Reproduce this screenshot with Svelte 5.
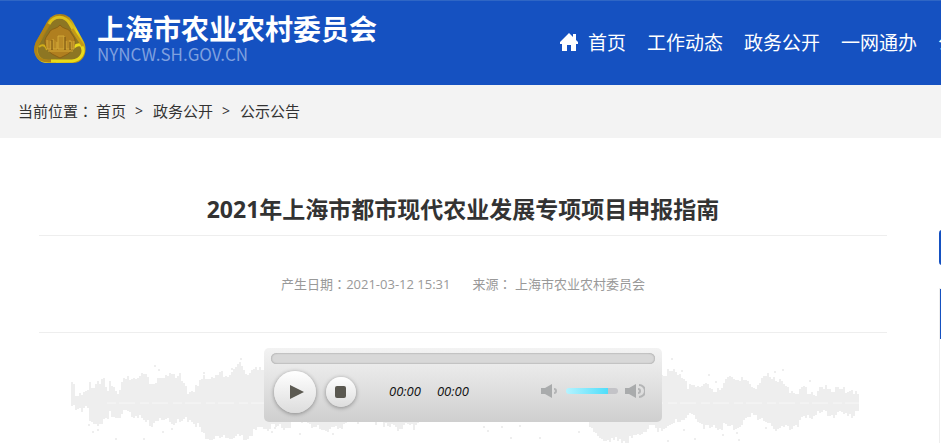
<script lang="ts">
  const menu = ['首页', '工作动态', '政务公开', '一网通办', '公众互动'];
  const crumbs = ['首页', '政务公开', '公示公告'];

  // outline of the sound wave: x, height above the axis, depth below it
  const envelope = [
    [0, 20, 5], [2, 22, 4], [4, 10, 3], [8, 11, 4], [12, 11, 6], [16, 10, 8],
    [18, 20, 20], [22, 18, 21], [26, 22, 20], [32, 21, 17], [36, 11, 18],
    [38, 21, 12], [46, 12, 12], [50, 20, 12], [56, 24, 10], [64, 25, 12],
    [74, 29, 20], [80, 20, 20], [86, 22, 17], [94, 25, 17], [98, 34, 18],
    [104, 26, 18], [108, 26, 20], [112, 16, 18], [118, 11, 14], [126, 17, 22],
    [132, 26, 33], [142, 26, 36], [150, 28, 36], [158, 30, 34], [168, 38, 35],
    [176, 30, 34], [182, 31, 28], [190, 34, 24], [218, 34, 24], [222, 34, 17],
    [236, 34, 17], [240, 34, 26], [268, 34, 25], [274, 34, 18], [310, 34, 18],
    [316, 34, 24], [342, 34, 24], [350, 34, 15], [516, 34, 15], [520, 34, 27],
    [526, 34, 35], [546, 34, 38], [560, 34, 37], [576, 34, 25], [592, 28, 25],
    [602, 33, 22], [611, 28, 14], [616, 14, 12], [622, 17, 14], [630, 20, 21],
    [640, 12, 26], [648, 16, 22], [656, 24, 25], [664, 26, 25], [674, 20, 18],
    [682, 16, 10], [692, 26, 19], [702, 28, 24], [710, 20, 25], [720, 12, 23],
    [730, 13, 18], [744, 11, 11], [756, 15, 11], [770, 12, 12], [780, 13, 11],
    [787, 8, 8],
  ];

  const specks = [
    [83, 25], [87, 29], [132, 32], [169, 18], [160, 28], [17, 84], [21, 91],
    [26, 89], [44, 98], [72, 98], [91, 91], [100, 88], [600, 18], [610, 30],
    [637, 34], [644, 41], [703, 31], [711, 29], [738, 40], [665, 92],
    [612, 89], [623, 98], [651, 94], [667, 99], [596, 100], [694, 87],
    [203, 87], [200, 91], [228, 93], [258, 87], [261, 93], [412, 86],
    [416, 90], [430, 86], [448, 85], [439, 97], [468, 97], [507, 91],
  ];

  function depth(x: number, side: number) {
    const i = Math.max(1, envelope.findIndex((p) => p[0] >= x));
    const a = envelope[i - 1];
    const b = envelope[i];
    const t = (x - a[0]) / (b[0] - a[0]);
    const noise = ((Math.sin(x * 12.9 + side * 78.2) * 43758.5) % 1) * 4;
    return Math.round(a[side] + (b[side] - a[side]) * t + noise);
  }

  let top = '';
  let bottom = '';
  for (let x = 0; x < 787; x += 2) {
    top += `V${63 - depth(x, 1)}h2`;
    bottom = `V${63 + depth(x, 2)}h-2` + bottom;
  }
  const wave = `M0 63${top}V63${bottom}Z`;

  let progress = $state(0);
  let volume = $state(80);
</script>

<header>
  <a class="brand" href="/">
    <svg class="emblem" viewBox="0 0 52 50" aria-hidden="true">
      <defs>
        <linearGradient id="gold" x1="0" y1="0" x2="1" y2="1">
          <stop offset="0" stop-color="#d9b411" />
          <stop offset="0.3" stop-color="#a77b16" />
          <stop offset="0.6" stop-color="#e7d51c" />
          <stop offset="1" stop-color="#b3850f" />
        </linearGradient>
      </defs>
      <path
        d="M26 0C32 0 36 3 39 8L50 28C54 37 50 49 39 49H13C2 49-2 37 2 28L13 8C16 3 20 0 26 0Z"
        fill="url(#gold)"
      />
      <path
        d="M26 4C31 4 34 6 37 12L47 31C50 39 46 46 38 46H14C5 46 2 38 5 31L16 11C18 6 21 4 26 4Z"
        fill="#8d7623"
      />
      <path d="M15 10C20 1 31 1 36 10L40 17" fill="none" stroke="#dcc01c" stroke-width="3" />
      <path d="M14 10L3 29C-1 39 4 47 14 47H22" fill="none" stroke="#b08417" stroke-width="3" />
      <path d="M17 47H38C47 46 52 38 47 31C44 30 42 31 40 33" fill="none" stroke="#eadb1a" stroke-width="3" />
      <path d="M38 15L49 32" stroke="#c59a17" stroke-width="3" />
      <path d="M5 33C8 30 12 31 13 36" fill="none" stroke="#d1ad18" stroke-width="2" />
      <path
        d="M26 11C29 15 33 14 36 17C37 20 40 22 41 26C41 33 38 37 34 40L26 44L18 40C14 37 11 33 11 26C12 22 15 20 16 17C19 14 23 15 26 11Z"
        fill="#b07f1f"
        stroke="#8b6115"
      />
      <path
        d="M13 26V35H17V27M19 25V35H23V28M24 22H30V35H24ZM32 27V35H36V26M37 27V35H40V27M14 37H39"
        fill="#b98a26"
        stroke="#d3a936"
        stroke-width="1"
      />
      <path d="M18 26V36M31 23V36M36 28V36" stroke="#755213" />
    </svg>
    <span class="names">
      <strong>上海市农业农村委员会</strong>
      <small>NYNCW.SH.GOV.CN</small>
    </span>
  </a>
  <nav>
    <svg class="home" viewBox="0 0 18 18" aria-hidden="true">
      <path d="M9 0L13 4V1H16V7L18 9V11H16V18H11V12H7V18H2V11H0V9Z" fill="#fff" />
    </svg>
    {#each menu as item}
      <a href="/">{item}</a>
    {/each}
  </nav>
</header>

<div class="crumbs">
  <span class="label">当前位置<span class="colon">：</span></span>
  {#each crumbs as crumb, i}
    {#if i > 0}<span class="sep">&gt;</span>{/if}
    <a href="/">{crumb}</a>
  {/each}
</div>

<main>
  <article>
    <h1>2021年上海市都市现代农业发展专项项目申报指南</h1>
    <p class="meta">
      <span>产生日期<span class="colon">：</span>2021-03-12 15:31</span>
      <span>来源<span class="colon">：</span> 上海市农业农村委员会</span>
    </p>
    <div class="audio">
      <div class="wave">
        <svg viewBox="0 -7 788 110" preserveAspectRatio="none" aria-hidden="true">
          <path d={wave} fill="#eee" />
          {#each specks as [x, y]}
            <rect {x} {y} width="2" height="2" fill="#eee" />
          {/each}
          <path d="M36 63H788" stroke="#f7f7f7" stroke-dasharray="9 3 16 5" />
        </svg>
      </div>
      <div class="player">
        <input class="seek" type="range" aria-label="播放进度" bind:value={progress} />
        <div class="controls">
          <button class="play" aria-label="播放">
            <svg viewBox="0 0 14 16"><path d="M0 1L14 8L0 15Z" fill="#5c5a52" /></svg>
          </button>
          <button class="stop" aria-label="停止">
            <svg viewBox="0 0 12 12"><rect width="11" height="12" rx="2" fill="#5a5850" /></svg>
          </button>
          <div class="times">
            <span>00:00</span>
            <span>00:00</span>
          </div>
          <div class="volume">
            <svg class="low" viewBox="0 0 18 16" aria-hidden="true">
              <path d="M0 5H4L11 1V15L4 11H0Z" fill="#a9abac" />
              <path d="M13 6A2 2 0 0 1 13 10" fill="none" stroke="#b4b5b6" stroke-width="2" />
            </svg>
            <input
              type="range"
              aria-label="音量"
              style="--level: {volume}%"
              bind:value={volume}
            />
            <svg class="high" viewBox="0 0 20 16" aria-hidden="true">
              <path d="M0 5H4L11 1V15L4 11H0Z" fill="#a9abac" />
              <path
                d="M13 6A2 2 0 0 1 13 10M14 2A6 6 0 0 1 14 14"
                fill="none"
                stroke="#b4b5b6"
                stroke-width="2"
              />
            </svg>
          </div>
        </div>
      </div>
    </div>
  </article>
  <aside>
    <div class="search"></div>
    <div class="panel"><div class="panel-head"></div></div>
  </aside>
</main>

<style>
  :global(body) {
    font-family: 'Open Sans', 'Noto Sans CJK SC', sans-serif;
    background: #fff;
    color: #333;
    overflow: hidden;
  }
  a {
    color: inherit;
    text-decoration: none;
  }
  .colon {
    font-family: 'Noto Sans CJK TC', sans-serif;
  }

  header {
    display: flex;
    justify-content: space-between;
    box-sizing: border-box;
    height: 85px;
    padding-left: 34px;
    border-top: 1px solid #2f66c5;
    background: #1551c1;
    color: #fff;
    overflow: hidden;
  }
  .brand {
    display: flex;
    align-items: flex-start;
    gap: 11px;
    padding-top: 13px;
    white-space: nowrap;
  }
  .emblem {
    width: 52px;
    height: 50px;
  }
  .names {
    display: flex;
    flex-direction: column;

    strong {
      font-size: 28px;
      line-height: 30px;
    }
    small {
      font-family: 'Noto Sans CJK SC', sans-serif;
      font-size: 17px;
      line-height: 20px;
      color: #7fa0df;
    }
  }
  nav {
    display: flex;
    align-items: center;
    flex: 0 0 381px;
    gap: 21px;
    padding-bottom: 2px;
    font-size: 19px;
    white-space: nowrap;
    overflow: hidden;
  }
  .home {
    flex: none;
    width: 18px;
    height: 18px;
    margin-right: -11px;
  }

  .crumbs {
    display: flex;
    align-items: center;
    box-sizing: border-box;
    height: 53px;
    padding: 0 18px 2px;
    gap: 5px;
    background: #f3f3f3;
    font-size: 15px;

    .label {
      margin-right: -2px;
    }
    .sep {
      margin: 0 5px 0 4px;
      font-size: 14px;
    }
  }

  main {
    display: flex;
    gap: 52px;
    padding-left: 39px;
  }
  article {
    flex: 1;
    min-width: 0;
  }
  h1 {
    margin: 0;
    padding: 53px 0 7px;
    border-bottom: 1px solid #eee;
    font-size: 23px;
    line-height: 37px;
    text-align: center;
  }
  .meta {
    display: flex;
    justify-content: center;
    gap: 22px;
    margin: 0;
    padding: 38px 0;
    border-bottom: 1px solid #eee;
    color: #999;
    font-size: 13px;
    line-height: 20px;
  }

  .audio {
    display: grid;
  }
  .wave {
    grid-area: 1 / 1;
    padding: 0 28px 0 32px;

    svg {
      display: block;
      width: 100%;
      height: 110px;
    }
  }
  .player {
    grid-area: 1 / 1;
    justify-self: center;
    z-index: 1;
    display: flex;
    flex-direction: column;
    box-sizing: border-box;
    width: 398px;
    height: 74px;
    margin-top: 15px;
    padding: 5px 7px;
    border-radius: 5px;
    background: linear-gradient(#f3f3f3, #cfcfcf);
  }
  input {
    appearance: none;
    margin: 0;
  }
  input::-webkit-slider-thumb {
    appearance: none;
    width: 0;
  }
  .seek {
    width: 100%;
    height: 11px;
    border-radius: 6px;
    background: #d8d8d8;
    box-shadow: inset 0 0 2px #888;
  }
  .controls {
    display: flex;
    align-items: center;
    padding: 7px 10px 0 3px;
  }
  button {
    display: flex;
    align-items: center;
    justify-content: center;
    padding: 0;
    border: none;
    border-radius: 50%;
    background: linear-gradient(#fff, #ddd);
    box-shadow: 0 1px 4px #888;
  }
  .play {
    width: 42px;
    height: 42px;

    svg {
      width: 14px;
      height: 16px;
      margin-left: 3px;
    }
  }
  .stop {
    width: 30px;
    height: 30px;
    margin-left: 10px;

    svg {
      width: 12px;
      height: 12px;
    }
  }
  .times {
    display: flex;
    gap: 16px;
    margin-left: 33px;
    padding-bottom: 3px;
    color: #111;
    font-size: 13px;
    font-style: italic;
  }
  .volume {
    display: flex;
    align-items: center;
    gap: 7px;
    margin-left: auto;
    padding-bottom: 3px;

    svg {
      height: 16px;
    }
    .low {
      width: 18px;
    }
    .high {
      width: 20px;
    }
    input {
      width: 52px;
      height: 6px;
      border-radius: 3px;
      background: linear-gradient(90deg, #b5f3ff, #50defa var(--level), #c3c3c7 var(--level));
    }
  }

  aside {
    flex: 0 0 2px;
    padding-top: 92px;
    overflow: hidden;
  }
  .search {
    width: 40px;
    height: 35px;
    border-radius: 3px;
    background: #1551c1;
  }
  .panel {
    width: 40px;
    height: 154px;
    margin-top: 23px;
    border: 1px solid #eee;
    border-bottom: none;
  }
  .panel-head {
    height: 50px;
    background: #1551c1;
  }
</style>
